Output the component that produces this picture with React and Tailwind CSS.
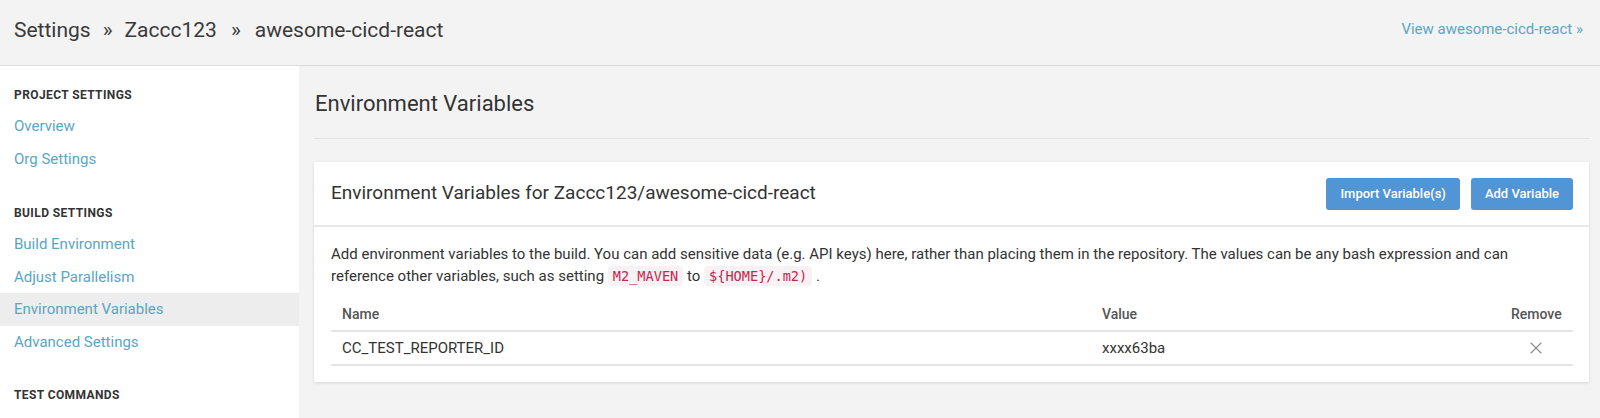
import React from 'react';
import { X } from 'lucide-react';

const SectionTitle = ({ children, className = '' }) => (
    <div className={`h-[20px] mb-[5px] px-[14px] flex items-center text-[12px] font-bold tracking-[0.4px] text-[#333] ${className}`}>
        {children}
    </div>
);

const SideLink = ({ label, active }) => (
    <div
        className={`h-[32.5px] px-[14px] flex items-center text-[15px] text-[#5aa6c4] ${active ? 'bg-[#ededed]' : ''}`}
    >
        {label}
    </div>
);

const Code = ({ children }) => (
    <code className="bg-[#f9f2f4] text-[#c7254e] rounded-[4px] px-[5px] py-[2px] text-[13.6px] font-['DejaVu_Sans_Mono',monospace]">
        {children}
    </code>
);

const Button = ({ children }) => (
    <button className="h-[32px] px-[14px] rounded-[3px] bg-[#5195d5] text-white text-[13px] font-medium">
        {children}
    </button>
);

export default function App() {
    return (
        <div className="w-[1600px] h-[418px] overflow-hidden bg-[#f3f3f3] font-['Roboto',sans-serif] text-[#333]">
            {/* Header */}
            <header className="h-[66px] border-b border-[#dcdcdc] flex items-start justify-between pl-[14px] pr-[17px] pt-[16px]">
                <div className="flex items-center text-[21px] text-[#3a3a3a] leading-[28px]">
                    <span>Settings</span>
                    <span className="mx-[12px]">»</span>
                    <span>Zaccc123</span>
                    <span className="mx-[14px]">»</span>
                    <span>awesome-cicd-react</span>
                </div>
                <a className="text-[15px] text-[#5aa6c4] leading-[24px] pt-[1px]">View awesome-cicd-react »</a>
            </header>

            <div className="flex h-[352px]">
                {/* Sidebar */}
                <aside className="w-[299px] shrink-0 bg-white pt-[19px]">
                    <SectionTitle>PROJECT SETTINGS</SectionTitle>
                    <SideLink label="Overview" />
                    <SideLink label="Org Settings" />

                    <SectionTitle className="mt-[28px]">BUILD SETTINGS</SectionTitle>
                    <SideLink label="Build Environment" />
                    <SideLink label="Adjust Parallelism" />
                    <SideLink label="Environment Variables" active />
                    <SideLink label="Advanced Settings" />

                    <SectionTitle className="mt-[27px]">TEST COMMANDS</SectionTitle>
                </aside>

                {/* Main */}
                <main className="flex-1 pl-[15px] pr-[11px] pt-[23px]">
                    <h1 className="text-[22px] leading-[30px] text-[#333] pl-[1px]">Environment Variables</h1>
                    <div className="mt-[19px] border-b border-[#e2e2e2]" />

                    <section className="mt-[23px] bg-white shadow-[0_1px_3px_rgba(0,0,0,0.12)]">
                        <div className="h-[65px] flex items-center justify-between pl-[17px] pr-[16px] border-b-2 border-[#e8e8e8]">
                            <h2 className="text-[19px] text-[#333]">Environment Variables for Zaccc123/awesome-cicd-react</h2>
                            <div className="flex gap-[11px]">
                                <Button>Import Variable(s)</Button>
                                <Button>Add Variable</Button>
                            </div>
                        </div>

                        <div className="pl-[17px] pr-[16px] pt-[16px] pb-[16px]">
                            <p className="text-[15px] leading-[22px] text-[#333]">
                                Add environment variables to the build. You can add sensitive data (e.g. API keys) here, rather than placing them in the repository. The values can be any bash expression and can reference other variables, such as setting <Code>M2_MAVEN</Code> to <Code>{'${HOME}/.m2)'}</Code> .
                            </p>

                            <div className="mt-[12px] text-[14px]">
                                <div className="flex h-[33px] items-center border-b-2 border-[#e6e6e6] font-medium text-[#555]">
                                    <div className="w-[760px] px-[11px]">Name</div>
                                    <div className="w-[409px] px-[11px]">Value</div>
                                    <div className="w-[72px] px-[11px] text-center">Remove</div>
                                </div>
                                <div className="flex h-[34px] items-center border-b-2 border-[#e6e6e6] text-[15px] text-[#333]">
                                    <div className="w-[760px] px-[11px]">CC_TEST_REPORTER_ID</div>
                                    <div className="w-[409px] px-[11px]">xxxx63ba</div>
                                    <div className="w-[72px] px-[11px] flex justify-center">
                                        <X size={20} strokeWidth={1.4} className="text-[#8c8c8c]" />
                                    </div>
                                </div>
                            </div>
                        </div>
                    </section>
                </main>
            </div>
        </div>
    );
}
